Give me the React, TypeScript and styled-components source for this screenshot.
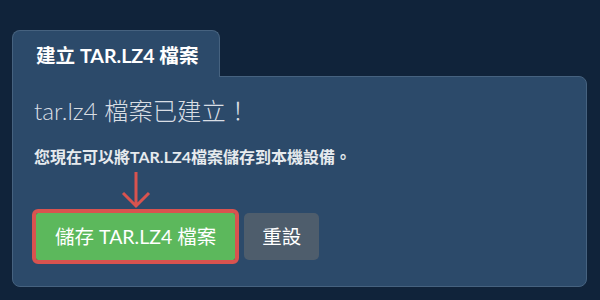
import styled, { createGlobalStyle } from "styled-components";

const GlobalStyle = createGlobalStyle`
  html, body {
    margin: 0;
    padding: 0;
    background: #10233a;
  }

  body {
    font-family: "Lato", "Noto Sans CJK TC", sans-serif;
  }
`;

function App() {
  return (
    <>
      <GlobalStyle />
      <Page>
        <Tab>建立 TAR.LZ4 檔案</Tab>
        <Panel>
          <Heading>tar.lz4 檔案已建立！</Heading>
          <Message>您現在可以將TAR.LZ4檔案儲存到本機設備。</Message>
          <Actions>
            <Highlight>
              <Arrow width="30" height="38" viewBox="0 0 30 38">
                <path
                  d="M15 1 V35 M2 22 L15 35 L28 22"
                  fill="none"
                  stroke="#d9534f"
                  strokeWidth="3"
                />
              </Arrow>
              <Button $variant="success">儲存 TAR.LZ4 檔案</Button>
            </Highlight>
            <Button $variant="default">重設</Button>
          </Actions>
        </Panel>
      </Page>
    </>
  );
}

export default App;

const Page = styled.div`
  display: flex;
  flex-direction: column;
  align-items: flex-start;
  width: 600px;
  height: 300px;
  box-sizing: border-box;
  padding: 30px 13px 13px 12px;
`;

const Tab = styled.div`
  position: relative;
  z-index: 1;
  margin-bottom: -1px;
  padding: 11px 10px 8px 23px;
  width: 208px;
  box-sizing: border-box;
  background: #2c4a6a;
  border: 1px solid #46627f;
  border-bottom: none;
  border-radius: 8px 8px 0 0;
  color: #ffffff;
  font-size: 19.6px;
  font-weight: 700;
  line-height: 27px;
  white-space: nowrap;
`;

const Panel = styled.div`
  width: 100%;
  flex: 1;
  box-sizing: border-box;
  padding: 21px 21px 24px;
  background: #2c4a6a;
  border: 1px solid #46627f;
  border-radius: 0 8px 8px 8px;
`;

const Heading = styled.h2`
  margin: 0;
  color: #d9dee4;
  font-size: 24.3px;
  font-weight: 300;
  line-height: 26px;
`;

const Message = styled.p`
  margin: 22px 0 0;
  color: #e6eaee;
  font-size: 16px;
  font-weight: 700;
  line-height: 22px;
`;

const Actions = styled.div`
  display: flex;
  align-items: center;
  gap: 9px;
  margin: 45px 0 0 2px;
`;

const Highlight = styled.div`
  position: relative;
  display: flex;
`;

const Arrow = styled.svg`
  position: absolute;
  left: 50%;
  top: -42px;
  transform: translateX(-50%);
`;

const Button = styled.button<{ $variant: "success" | "default" }>`
  padding: ${({ $variant }) => ($variant === "success" ? "10px 19px" : "10px 18px")};
  border: none;
  border-radius: ${({ $variant }) => ($variant === "success" ? "2px" : "5px")};
  background: ${({ $variant }) => ($variant === "success" ? "#5cb85c" : "#4e5d6c")};
  outline: ${({ $variant }) => ($variant === "success" ? "4px solid #d9534f" : "none")};
  color: #ffffff;
  font-family: "Lato", "Noto Sans CJK TC", sans-serif;
  font-size: 19.5px;
  font-weight: 400;
  line-height: 27px;
  white-space: nowrap;
  cursor: pointer;
`;
